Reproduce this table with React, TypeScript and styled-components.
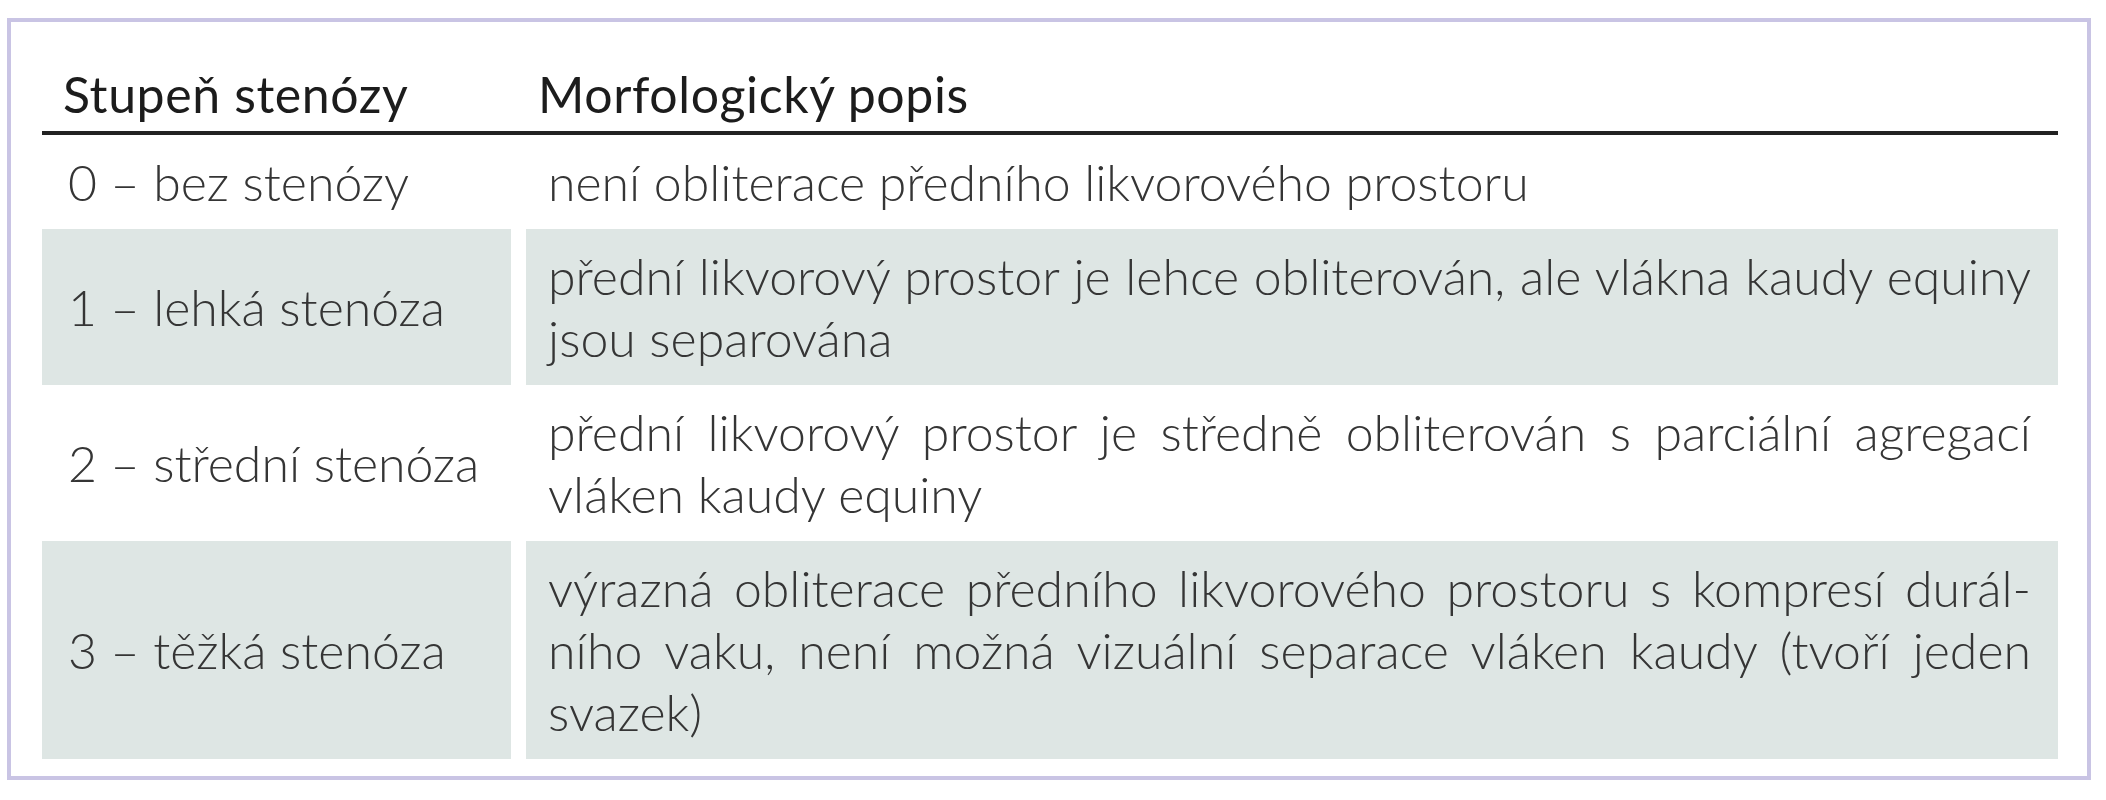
import React from "react";
import styled, { createGlobalStyle } from "styled-components";

const GlobalStyle = createGlobalStyle`
  html, body {
    margin: 0;
    padding: 0;
    background: #ffffff;
  }
  body {
    font-family: Lato, "Open Sans", "Liberation Sans", sans-serif;
  }
`;

const Page = styled.div`
  width: 2106px;
  height: 800px;
  padding: 18px 15px 0 7px;
  box-sizing: border-box;
`;

const Frame = styled.div`
  width: 2084px;
  height: 762px;
  box-sizing: border-box;
  border: 4px solid #c9c4e4;
  padding: 0 29px 0 31px;
`;

const Table = styled.div`
  display: grid;
  grid-template-columns: 469px minmax(0, 1fr);
  column-gap: 15px;
  font-size: 50px;
  line-height: 62px;
`;

const Head = styled.div`
  grid-column: 1 / -1;
  display: grid;
  grid-template-columns: 469px minmax(0, 1fr);
  column-gap: 15px;
  border-bottom: 4px solid #222222;
`;

const HeadCell = styled.div<{ $pad: number }>`
  padding: 41px 0 6px ${(p) => p.$pad}px;
  color: #1c1c1c;
  font-weight: 400;
  letter-spacing: 0.6px;
  white-space: nowrap;
`;

const GradeCell = styled.div<{ $shaded: boolean }>`
  display: flex;
  align-items: center;
  padding: 16px 0 16px 26px;
  background: ${(p) => (p.$shaded ? "#dee6e4" : "transparent")};
  color: #353535;
  font-weight: 300;
  white-space: nowrap;
`;

const DescCell = styled.div<{ $shaded: boolean }>`
  padding: 16px 27px 16px 22px;
  background: ${(p) => (p.$shaded ? "#dee6e4" : "transparent")};
  color: #353535;
  font-weight: 300;
`;

const Line = styled.div<{ $justify: boolean }>`
  text-align: ${(p) => (p.$justify ? "justify" : "left")};
  text-align-last: ${(p) => (p.$justify ? "justify" : "left")};
  white-space: nowrap;
`;

interface Row {
  readonly grade: string;
  readonly lines: string[];
  readonly shaded: boolean;
}

const rows: Row[] = [
  {
    grade: "0 – bez stenózy",
    lines: ["není obliterace předního likvorového prostoru"],
    shaded: false,
  },
  {
    grade: "1 – lehká stenóza",
    lines: [
      "přední likvorový prostor je lehce obliterován, ale vlákna kaudy equiny",
      "jsou separována",
    ],
    shaded: true,
  },
  {
    grade: "2 – střední stenóza",
    lines: [
      "přední likvorový prostor je středně obliterován s parciální agregací",
      "vláken kaudy equiny",
    ],
    shaded: false,
  },
  {
    grade: "3 – těžká stenóza",
    lines: [
      "výrazná obliterace předního likvorového prostoru s kompresí durál-",
      "ního vaku, není možná vizuální separace vláken kaudy (tvoří jeden",
      "svazek)",
    ],
    shaded: true,
  },
];

const App: React.FC = () => {
  return (
    <Page>
      <GlobalStyle />
      <Frame>
        <Table>
          <Head>
            <HeadCell $pad={21}>Stupeň stenózy</HeadCell>
            <HeadCell $pad={12}>Morfologický popis</HeadCell>
          </Head>
          {rows.map((row, index) => (
            <React.Fragment key={index}>
              <GradeCell $shaded={row.shaded}>{row.grade}</GradeCell>
              <DescCell $shaded={row.shaded}>
                {row.lines.map((line, i) => (
                  <Line key={i} $justify={i < row.lines.length - 1}>
                    {line}
                  </Line>
                ))}
              </DescCell>
            </React.Fragment>
          ))}
        </Table>
      </Frame>
    </Page>
  );
};

export default App;
